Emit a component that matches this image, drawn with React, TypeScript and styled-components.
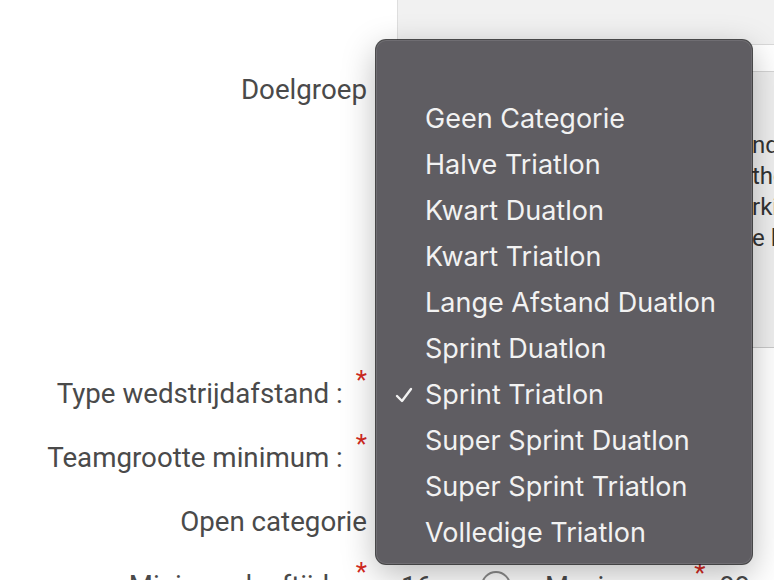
import { createGlobalStyle } from "styled-components";
import styled from "styled-components";

const GlobalStyle = createGlobalStyle`
    html, body {
        margin: 0;
        padding: 0;
        background: #ffffff;
        overflow: hidden;
    }
    body {
        font-family: Roboto, "Liberation Sans", sans-serif;
    }
`;

const Page = styled.div`
    position: relative;
    width: 774px;
    height: 580px;
    overflow: hidden;
    display: grid;
    grid-template-columns: 397px 1fr;
    grid-template-rows: 45px 317px;
    grid-auto-rows: 64px;
    align-items: center;
    color: #4a4a4a;
`;

/* bovenste grijze balk rechts */
const TopPanel = styled.div`
    grid-column: 2;
    align-self: stretch;
    background: #f1f1f1;
    border-left: 1px solid #dedede;
    border-bottom: 1px solid #d9d9d9;
`;

const Label = styled.div<{ $top?: boolean }>`
    grid-column: 1;
    align-self: ${(p) => (p.$top ? "start" : "center")};
    padding-top: ${(p) => (p.$top ? "25px" : "0")};
    padding-right: 30px;
    text-align: right;
    font-size: 27.7px;
    line-height: 40px;
    white-space: nowrap;
`;

const Required = styled.span`
    color: #d42a1f;
    font-size: 26px;
    margin-left: 13px;
    position: relative;
    top: -14px;
`;

const DescBox = styled.div`
    grid-column: 2;
    align-self: start;
    margin-top: 26px;
    height: 277px;
    background: #efefef;
    border-top: 1px solid #d4d4d4;
    border-bottom: 1px solid #c9c9c9;
    padding: 58px 0 0 355px;
    box-sizing: border-box;
    font-size: 24px;
    line-height: 31px;
    color: #333333;
    white-space: nowrap;
`;

const Field = styled.div`
    grid-column: 2;
    display: flex;
    align-items: center;
    gap: 14px;
    font-size: 27.5px;
`;

const SelectBox = styled.div`
    width: 300px;
    height: 40px;
    border: 1px solid #cccccc;
    border-radius: 4px;
`;

const NumberValue = styled.span`
    width: 66px;
    padding-left: 4px;
`;

const Spinner = styled.span`
    width: 26px;
    height: 26px;
    border: 2px solid #8c8c8c;
    border-radius: 50%;
    margin-right: 20px;
`;

/* macOS-achtige keuzelijst bovenop het formulier */
const Menu = styled.ul`
    position: absolute;
    left: 376px;
    top: 40px;
    width: 376px;
    height: 524px;
    margin: 0;
    padding: 10px 0 8px;
    box-sizing: border-box;
    list-style: none;
    background: #5f5d62;
    border-radius: 10px;
    box-shadow: 0 0 0 1px rgba(20, 20, 22, 0.75),
        inset 0 0 0 1px rgba(255, 255, 255, 0.1),
        0 10px 34px rgba(0, 0, 0, 0.28);
    font-family: Inter, "Liberation Sans", sans-serif;
    font-size: 27px;
    color: #f2f2f2;
`;

const MenuItem = styled.li`
    position: relative;
    height: 46px;
    line-height: 46px;
    padding-left: 49px;
    white-space: nowrap;
`;

const Check = styled.svg`
    position: absolute;
    left: 19px;
    top: 15px;
`;

const options = [
    "",
    "Geen Categorie",
    "Halve Triatlon",
    "Kwart Duatlon",
    "Kwart Triatlon",
    "Lange Afstand Duatlon",
    "Sprint Duatlon",
    "Sprint Triatlon",
    "Super Sprint Duatlon",
    "Super Sprint Triatlon",
    "Volledige Triatlon",
];

const selected = "Sprint Triatlon";

const App = () => {
    return (
        <>
            <GlobalStyle />
            <Page>
                <TopPanel />
                <Label $top>Doelgroep</Label>
                <DescBox>
                    <div>nd</div>
                    <div>tho</div>
                    <div>rki</div>
                    <div>e l</div>
                </DescBox>
                <Label>
                    Type wedstrijdafstand :<Required>*</Required>
                </Label>
                <Field>
                    <SelectBox />
                </Field>
                <Label>
                    Teamgrootte minimum :<Required>*</Required>
                </Label>
                <Field>
                    <SelectBox />
                </Field>
                <Label>Open categorie</Label>
                <Field />
                <Label>
                    Minimumleeftijd :<Required>*</Required>
                </Label>
                <Field>
                    <NumberValue>16</NumberValue>
                    <Spinner />
                    <span>
                        Maximum :<Required>*</Required>
                    </span>
                    <span>99</span>
                </Field>
                <Menu>
                    {options.map((option, i) => (
                        <MenuItem key={i}>
                            {option === selected && (
                                <Check width="18" height="16" viewBox="0 0 18 16">
                                    <path d="M2 9 L7 14 L16 2" fill="none" stroke="#f2f2f2" strokeWidth="2.4" strokeLinecap="round" strokeLinejoin="round" />
                                </Check>
                            )}
                            {option || "\u00a0"}
                        </MenuItem>
                    ))}
                </Menu>
            </Page>
        </>
    );
};

export default App;
